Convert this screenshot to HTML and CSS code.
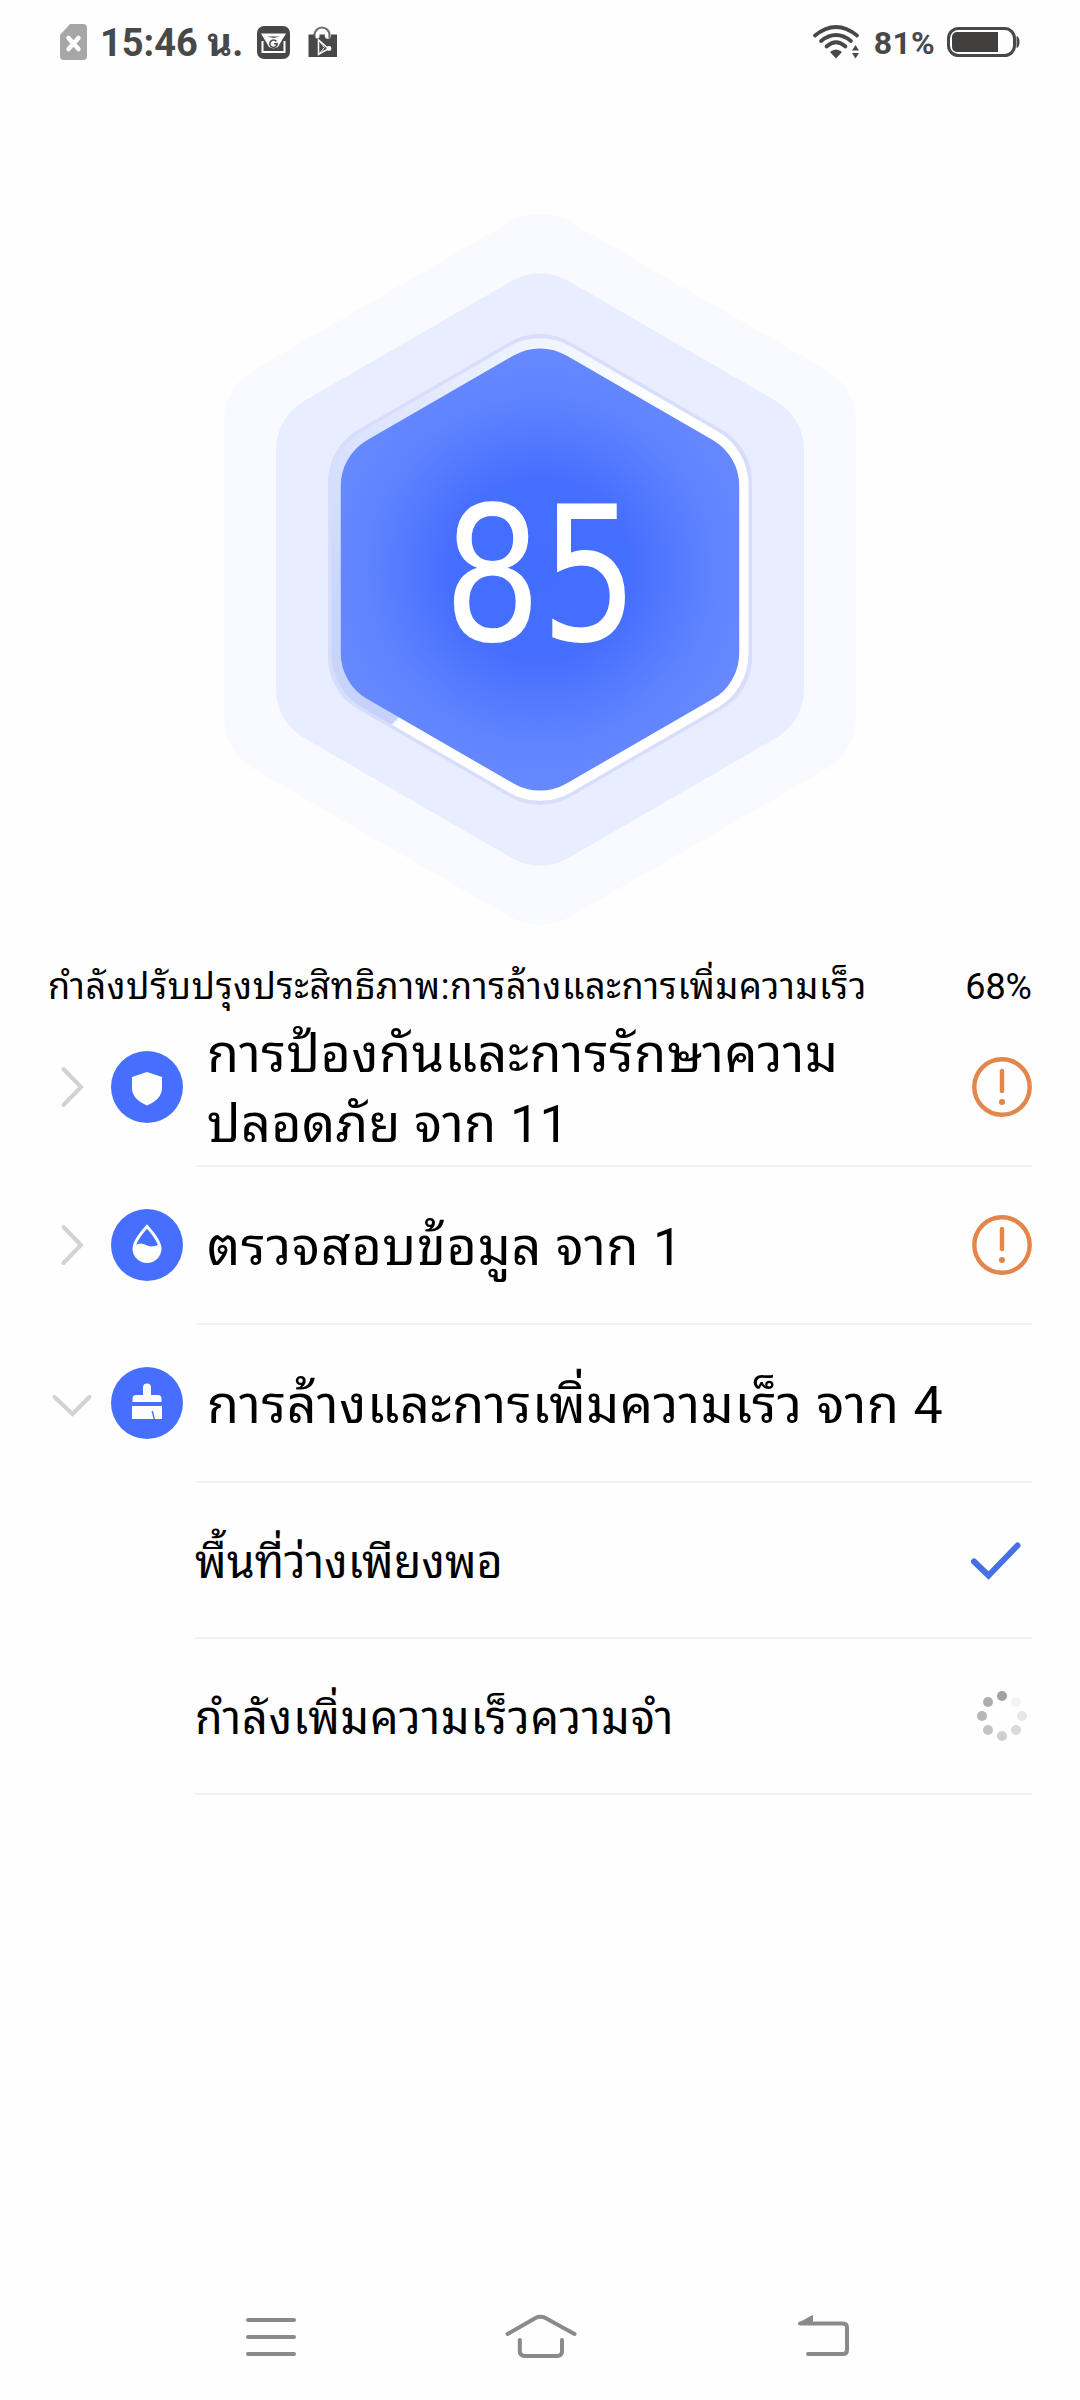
FILE: index.html
```html
<!DOCTYPE html>
<html lang="th">
<head>
<meta charset="utf-8">
<title>85</title>
<link rel="stylesheet" href="styles.css">
</head>
<body>
<div class="screen">
  <header class="status">
    <div class="status-side">
      <svg class="sim" width="27" height="36" viewBox="0 0 27 36"><path d="M10 0H23a4 4 0 0 1 4 4V32a4 4 0 0 1-4 4H4a4 4 0 0 1-4-4V11Z" fill="#a6a6a6"/><path d="M8.500 14 18.500 25M18.500 14 8.500 25" stroke="#fefefe" stroke-width="4.500" stroke-linecap="round"/></svg>
      <span class="time">15:46 น.</span>
      <svg class="mail" width="33" height="33" viewBox="0 0 33 33"><rect width="33" height="33" rx="7" fill="#484848"/><path d="M5.500 15V26H27.500V15" fill="none" stroke="#fefefe" stroke-width="2"/><path d="M4 7.500H29L23 17.500 21 21 16.500 22.500 12 21 10 17.500Z" fill="#fefefe"/><path d="M10 10.500H23L16.500 12Z" fill="#484848"/><path d="M19.500 15.500A3.700 3.700 0 1 0 20.200 17.800H17" fill="none" stroke="#484848" stroke-width="1.500"/></svg>
      <svg class="bag" width="29" height="32" viewBox="0 0 29 32"><path d="M6.500 12V9a7.500 7.500 0 0 1 15 0v3" fill="none" stroke="#707070" stroke-width="2.200"/><path d="M.5 8.500H6.500a3 3 0 0 0 3 4 2 2 0 0 0 2-2V8.500H17a3 3 0 0 0 4 4 2 2 0 0 0 2-2V8.500H29V31H.5Z" fill="#484848"/><path d="M10.500 14V28.500L21 22.500 18 20.500Z" fill="none" stroke="#fefefe" stroke-width="1.500"/><path d="M10.500 14 16.500 21.500 10.500 28.500" fill="none" stroke="#fefefe" stroke-width="1"/><circle cx="21" cy="22.500" r="2.400" fill="#fefefe"/></svg>
    </div>
    <div class="status-side">
      <svg class="wifi" width="47" height="34" viewBox="0 0 47 34"><g fill="none" stroke="#484848" stroke-width="3.700" stroke-linecap="round"><path d="M2 10.500Q23 -6.500 44 10.500"/><path d="M8 16Q23 4 38 16"/><path d="M13.500 21.500Q23 13 32.500 21.500"/></g><path d="M23 33.500 17 27Q23 22 29 27Z" fill="#484848"/><path d="M42.500 20 46 25.500H39ZM42.500 33.500 46 28H39Z" fill="#484848"/></svg>
      <span class="percent">81%</span>
      <svg width="73" height="30" viewBox="0 0 73 30"><rect x="1.500" y="1.500" width="66" height="27" rx="10" fill="none" stroke="#484848" stroke-width="3"/><path d="M10 5H51V25H10a5 5 0 0 1-5-5V10a5 5 0 0 1 5-5Z" fill="#403f3d"/><path d="M69.500 9Q72.500 10 72.500 15T69.500 21Z" fill="#484848"/></svg>
    </div>
  </header>

  <section class="score">
    <svg class="layer" width="1080" height="866" viewBox="0 84 1080 866">
      <g transform="translate(540 569.500)" stroke-linejoin="round">
        <path d="M0-295.600 256-147.800V147.800L0 295.600-256 147.800V-147.800Z" fill="#f8faff" stroke="#f8faff" stroke-width="120"/>
        <path d="M0-240.200 208-120.100V120.100L0 240.200-208 120.100V-120.100Z" fill="#e8eeff" stroke="#e8eeff" stroke-width="112"/>
        <path d="M0-175.500 152-87.800V87.800L0 175.500-152 87.800V-87.800Z" fill="#d8ddfb" stroke="#d8ddfb" stroke-width="120"/>
      </g>
    </svg>
    <div class="ring"></div>
    <svg class="layer front" width="1080" height="866" viewBox="0 84 1080 866">
      <defs><radialGradient id="glow" gradientUnits="userSpaceOnUse" cx="540" cy="569.500" r="220"><stop offset="0" stop-color="#426dff"/><stop offset=".42" stop-color="#466fff"/><stop offset=".78" stop-color="#5f83ff"/><stop offset="1" stop-color="#6689ff"/></radialGradient></defs>
      <path d="M513.500 355.500A53 53 0 0 1 566.500 355.500L712.700 439.900A53 53 0 0 1 739.200 485.800V653.200A53 53 0 0 1 712.700 699.100L566.500 783.500A53 53 0 0 1 513.500 783.500L367.300 699.100A53 53 0 0 1 340.800 653.200V485.800A53 53 0 0 1 367.300 439.900Z" fill="url(#glow)"/>
      <text class="digits" transform="translate(443.500 639.500) scale(.823 1)" x="0 118" y="0">85</text>
    </svg>
  </section>

  <div class="progress"><span class="progress-label">กำลังปรับปรุงประสิทธิภาพ:การล้างและการเพิ่มความเร็ว</span><span>68%</span></div>

  <main>
    <div class="row first">
      <svg class="chevron" width="44" height="44" viewBox="0 0 44 44"><path d="M14.500 4 32 22 14.500 40"/></svg>
      <svg class="badge" width="72" height="72" viewBox="0 0 72 72"><circle cx="36" cy="36" r="36" fill="#466fff"/><path d="M36 21 51 26V37Q51 48 36 54.500 21 48 21 37V26Z" fill="#fefefe"/></svg>
      <div class="cell"><span class="title protect">การป้องกันและการรักษาความ<br><span class="protect-end">ปลอดภัย จาก 11</span></span>
      <svg width="60" height="60" viewBox="0 0 60 60"><circle cx="30" cy="30" r="27.700" class="warn"/><path d="M30 14V34" class="warn"/><circle cx="30" cy="45" r="3" fill="#e2864b"/></svg></div>
    </div>
    <div class="row">
      <svg class="chevron" width="44" height="44" viewBox="0 0 44 44"><path d="M14.500 4 32 22 14.500 40"/></svg>
      <svg class="badge" width="72" height="72" viewBox="0 0 72 72"><circle cx="36" cy="36" r="36" fill="#466fff"/><path d="M36 17.500Q49 32 49 39.500a13 13 0 0 1-26 0Q23 32 36 17.500Z" fill="none" stroke="#fefefe" stroke-width="3"/><path d="M24 36Q30 33 35 36T48.500 35.500V41a12.700 12.700 0 0 1-25 0Z" fill="#fefefe"/></svg>
      <div class="cell"><span class="title data">ตรวจสอบข้อมูล จาก 1</span>
      <svg width="60" height="60" viewBox="0 0 60 60"><circle cx="30" cy="30" r="27.700" class="warn"/><path d="M30 14V34" class="warn"/><circle cx="30" cy="45" r="3" fill="#e2864b"/></svg></div>
    </div>
    <div class="row">
      <svg class="chevron" width="44" height="44" viewBox="0 0 44 44"><path d="M5.500 16 23.500 33 40.500 16"/></svg>
      <svg class="badge" width="72" height="72" viewBox="0 0 72 72"><circle cx="36" cy="36" r="36" fill="#466fff"/><path d="M32 28V20.500a4 4 0 0 1 8 0V28H47a3.500 3.500 0 0 1 3.500 3.500V35h-29V31.500a3.500 3.500 0 0 1 3.500-3.500ZM21 39H51V52H44L42 44H40.500L42.500 52H21Z" fill="#fefefe"/></svg>
      <div class="cell"><span class="title clean">การล้างและการเพิ่มความเร็ว จาก 4</span></div>
    </div>
    <div class="row sub"><div class="cell"><span class="space">พื้นที่ว่างเพียงพอ</span>
      <svg width="64" height="60" viewBox="0 0 64 60"><path d="M6 31.500 20.500 45.500 49.500 15.500" fill="none" stroke="#4770e8" stroke-width="6" stroke-linecap="round"/></svg></div></div>
    <div class="row sub"><div class="cell"><span class="memory">กำลังเพิ่มความเร็วความจำ</span>
      <svg width="60" height="60" viewBox="0 0 60 60"><g><circle cx="30" cy="10" r="5" fill="#a1a1a1"/><circle cx="44" cy="16" r="5" fill="#f3f3f3"/><circle cx="50" cy="30" r="5" fill="#e7e7e7"/><circle cx="44" cy="44" r="5" fill="#dadada"/><circle cx="30" cy="50" r="5" fill="#cfcfcf"/><circle cx="16" cy="44" r="5" fill="#c4c4c4"/><circle cx="10" cy="30" r="5" fill="#b8b8b8"/><circle cx="16" cy="16" r="5" fill="#adadad"/></g></svg></div></div>
  </main>

  <nav class="nav">
    <svg width="58" height="50" viewBox="242 2312 58 50"><path d="M248 2320H294M248 2337H294M248 2354H294"/></svg>
    <svg class="home" width="74" height="50" viewBox="504 2312 74 50"><path d="M507.500 2334 535.500 2318Q540.500 2315.500 545.500 2318L574.500 2334M519.800 2340V2351Q519.800 2356 525 2356H557Q562 2356 562 2351V2340"/></svg>
    <svg width="58" height="50" viewBox="794 2312 58 50"><path d="M800 2323.500H843Q847 2323.500 847 2327.500V2350Q847 2354 843 2354H808"/><path class="tip" d="M799 2323 812.500 2315.500V2323Z"/></svg>
  </nav>
</div>
</body>
</html>
```
FILE: styles.css
```css
* { box-sizing: border-box; }
body { margin: 0; background: #fefefe; color: #000; font-family: Roboto, "Noto Sans Thai Looped", Loma, "Noto Sans Thai", "Noto Sans", sans-serif; }
svg { display: block; flex: none; }
span { white-space: nowrap; }
.screen { width: 1080px; height: 2400px; overflow: hidden; display: flex; flex-direction: column; }

.status { height: 84px; flex: none; display: flex; justify-content: space-between; align-items: center; padding: 0 60px; color: #484848; font-weight: 700; }
.status-side { display: flex; align-items: center; height: 84px; }
.time { font-size: 38px; line-height: 44px; margin: 2px 0 0 13px; }
.mail { margin-left: 14px; }
.bag { margin-left: 18px; }
.percent { font-size: 32px; line-height: 44px; margin: 2px 12px 0 14px; letter-spacing: .3px; }

.score { flex: none; height: 866px; display: grid; }
.layer, .ring { grid-area: 1 / 1; }
.front { z-index: 1; }
.ring { width: 418px; height: 482px; margin: 244.5px 0 0 331px; clip-path: path("M178 18.1A62 62 0 0 1 240 18.1L386.500 102.700A62 62 0 0 1 417.500 156.400V325.600A62 62 0 0 1 386.500 379.300L240 463.900A62 62 0 0 1 178 463.900L31.500 379.300A62 62 0 0 1 .5 325.600V156.400A62 62 0 0 1 31.500 102.700Z"); background: conic-gradient(from 224deg, #c5d1fa, #cbd8fc 46deg, #dfe6fd 91deg, #edf2fe 130deg, #fff 175deg 359deg, #e0e7fd 360deg); }
.digits { font-family: "DejaVu Sans", sans-serif; font-size: 187px; fill: #fff; }

.progress { flex: none; height: 58px; display: flex; justify-content: space-between; padding: 0 48px; font-size: 36px; line-height: 75px; }
.progress-label { letter-spacing: .67px; }

.row { height: 158px; display: flex; align-items: center; padding: 0 48px 0 49px; }
.row.first { height: 159px; }
.badge { margin: 0 0 2px 18px; }
.chevron { margin-bottom: 2px; }
.chevron path { fill: none; stroke: #d2d2d2; stroke-width: 4; stroke-linecap: round; }
.cell { flex: 1; align-self: stretch; display: flex; align-items: center; justify-content: space-between; margin-left: 13px; padding-left: 11px; border-bottom: 2px solid #f2f2f2; }
.title { font-size: 52px; line-height: 70px; padding-top: 6px; }
.protect { letter-spacing: .56px; }
.protect-end { letter-spacing: .38px; }
.data { letter-spacing: .76px; }
.clean { letter-spacing: .68px; }
.sub { height: 156px; font-size: 45px; padding-left: 195px; }
.sub .cell { margin-left: 0; padding-left: 0; }
.sub span { padding-bottom: 4px; }
.space { letter-spacing: .1px; }
.memory { letter-spacing: .9px; }
.warn { fill: none; stroke: #e2864b; stroke-width: 4.400; stroke-linecap: round; }

.nav { margin-top: auto; height: 126px; display: flex; padding: 38px 228px 0 242px; }
.home { margin: 0 216px 0 204px; }
.nav path { fill: none; stroke: #8a8a8a; stroke-width: 4; stroke-linecap: round; }
.nav .tip { fill: #8a8a8a; stroke-width: 1; }
```
